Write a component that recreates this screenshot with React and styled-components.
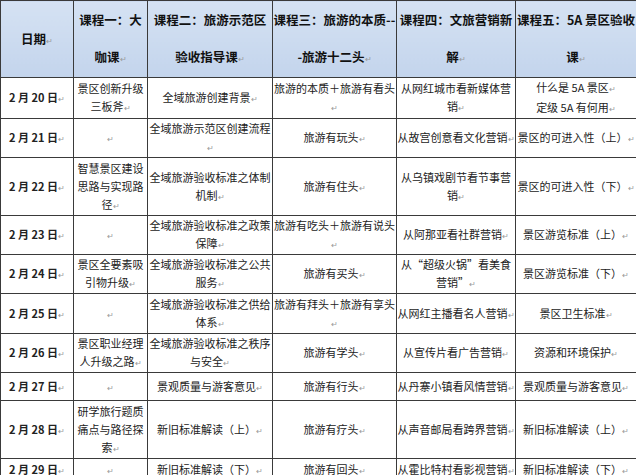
import React from "react";
import styled, { createGlobalStyle } from "styled-components";

const Global = createGlobalStyle`
  html, body { margin: 0; padding: 0; background: #fff; overflow: hidden; }
  body { font-family: "Noto Sans CJK SC", "Liberation Sans", sans-serif; }
`;

const Table = styled.table`
  width: 636px;
  border-collapse: collapse;
  table-layout: fixed;
`;

const Th = styled.th`
  background: linear-gradient(#d5e2f3, #c3d4ec);
  border: 1px solid #3a3a3a;
  font-size: 12.5px;
  font-weight: bold;
  line-height: 37px;
  padding: 0;
  text-align: center;
  vertical-align: middle;
  color: #111;
  overflow: hidden;
  word-break: break-all;
`;

const Td = styled.td`
  border: 1px solid #3a3a3a;
  font-size: 11px;
  line-height: 18px;
  padding: 0;
  text-align: center;
  vertical-align: middle;
  color: #222;
  font-weight: ${(p) => (p.$bold ? "bold" : "normal")};
  word-break: break-all;
  overflow: hidden;
`;

const Mark = styled.span`
  color: #999;
  font-size: 8px;
  font-weight: normal;
`;

const Row = styled.tr`
  height: ${(p) => p.$h}px;
`;

const M = () => <Mark>↵</Mark>;

const rows = [
  [39, "2 月 20 日", "景区创新升级三板斧", "全域旅游创建背景", "旅游的本质＋旅游有看头", "从网红城市看新媒体营销", ["什么是 5A 景区", "定级 5A 有何用"]],
  [39, "2 月 21 日", "", "全域旅游示范区创建流程", "旅游有玩头", "从故宫创意看文化营销", "景区的可进入性（上）"],
  [58, "2 月 22 日", "智慧景区建设思路与实现路径", "全域旅游验收标准之体制机制", "旅游有住头", "从乌镇戏剧节看节事营销", "景区的可进入性（下）"],
  [39, "2 月 23 日", "", "全域旅游验收标准之政策保障", "旅游有吃头＋旅游有说头", "从阿那亚看社群营销", "景区游览标准（上）"],
  [39, "2 月 24 日", "景区全要素吸引物升级", "全域旅游验收标准之公共服务", "旅游有买头", "从“超级火锅”看美食营销”", "景区游览标准（下）"],
  [40, "2 月 25 日", "", "全域旅游验收标准之供给体系", "旅游有拜头＋旅游有享头", "从网红主播看名人营销", "景区卫生标准"],
  [39, "2 月 26 日", "景区职业经理人升级之路", "全域旅游验收标准之秩序与安全", "旅游有学头", "从宣传片看广告营销", "资源和环境保护"],
  [28, "2 月 27 日", "", "景观质量与游客意见", "旅游有行头", "从丹寨小镇看风情营销", "景观质量与游客意见"],
  [58, "2 月 28 日", "研学旅行题质痛点与路径探索", "新旧标准解读（上）", "旅游有疗头", "从声音邮局看跨界营销", "新旧标准解读（上）"],
  [22, "2 月 29 日", "", "新旧标准解读（下）", "旅游有回头", "从霍比特村看影视营销", "新旧标准解读（下）"],
];

export default function App() {
  return (
    <>
      <Global />
      <Table>
        <colgroup>
          <col style={{ width: 73 }} />
          <col style={{ width: 74 }} />
          <col style={{ width: 125 }} />
          <col style={{ width: 124 }} />
          <col style={{ width: 119 }} />
          <col style={{ width: 121 }} />
        </colgroup>
        <thead>
          <Row $h={77}>
            <Th>日期<M /></Th>
            <Th>课程一：大咖课<M /></Th>
            <Th>课程二：旅游示范区验收指导课<M /></Th>
            <Th>课程三：旅游的本质---旅游十二头<M /></Th>
            <Th>课程四：文旅营销新解<M /></Th>
            <Th>课程五：5A 景区验收课<M /></Th>
          </Row>
        </thead>
        <tbody>
          {rows.map(([h, d, a, b, c, e, f]) => (
            <Row key={d} $h={h}>
              <Td $bold>{d}<M /></Td>
              <Td>{a}<M /></Td>
              <Td>{b}<M /></Td>
              <Td>{c}<M /></Td>
              <Td>{e}<M /></Td>
              <Td>
                {Array.isArray(f) ? (
                  <>
                    {f[0]}<M /><br />{f[1]}<M />
                  </>
                ) : (
                  <>{f}<M /></>
                )}
              </Td>
            </Row>
          ))}
        </tbody>
      </Table>
    </>
  );
}
